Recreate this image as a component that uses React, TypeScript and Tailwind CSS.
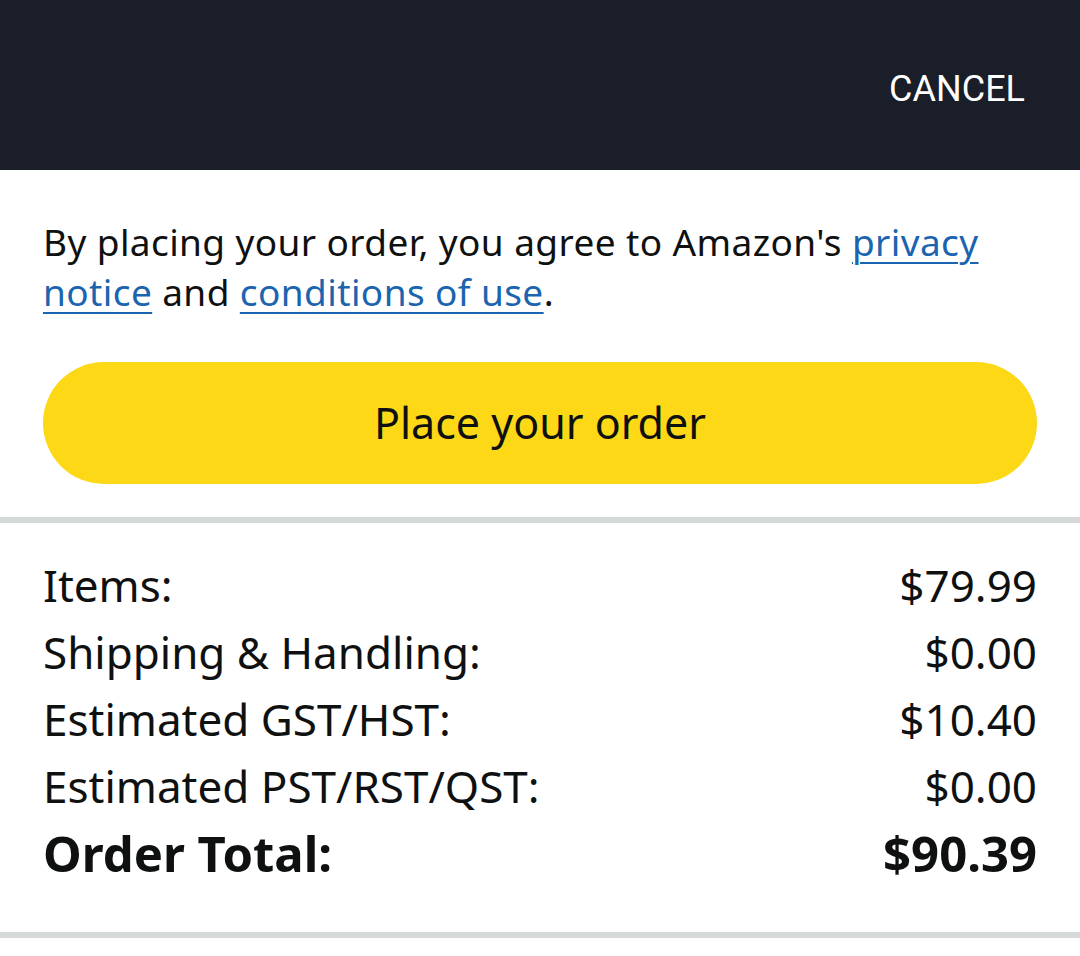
import React from 'react';

const rows = [
    { label: 'Items:', value: '$79.99' },
    { label: 'Shipping & Handling:', value: '$0.00' },
    { label: 'Estimated GST/HST:', value: '$10.40' },
    { label: 'Estimated PST/RST/QST:', value: '$0.00' },
];

const App: React.FC = () => {
    return (
        <div className="w-[1080px] min-h-[956px] bg-white font-['Noto_Sans',sans-serif] text-[#0f1111]">
            {/* ── Top bar ── */}
            <div className="h-[170px] bg-[#191e29] flex items-center justify-end pr-[55px] pt-[7px]">
                <span className="font-['Roboto',sans-serif] text-[36px] text-white">CANCEL</span>
            </div>

            {/* ── Agreement + button ── */}
            <div className="px-[43px] pt-[47px] pb-[33px]">
                <p className="text-[37px] leading-[50px] tracking-[0.4px]">
                    By placing your order, you agree to Amazon's{' '}
                    <a className="text-[#1b64b0] underline underline-offset-[6px] decoration-[2px]">privacy notice</a> and{' '}
                    <a className="text-[#1b64b0] underline underline-offset-[6px] decoration-[2px]">conditions of use</a>.
                </p>
                <button className="mt-[45px] w-full h-[122px] rounded-full bg-[#fdd816] text-[43px] text-[#0f1111]">
                    Place your order
                </button>
            </div>

            <div className="h-[6px] bg-[#d5d9d9]" />

            {/* ── Order summary ── */}
            <div className="px-[43px] pt-[28px] pb-[43px]">
                {rows.map(r => (
                    <div key={r.label} className="flex justify-between items-center h-[67px] text-[44px]">
                        <span>{r.label}</span>
                        <span>{r.value}</span>
                    </div>
                ))}
                <div className="flex justify-between items-center h-[70px] text-[49px] font-bold">
                    <span>Order Total:</span>
                    <span>$90.39</span>
                </div>
            </div>

            <div className="h-[6px] bg-[#d5d9d9]" />
        </div>
    );
};

export default App;
